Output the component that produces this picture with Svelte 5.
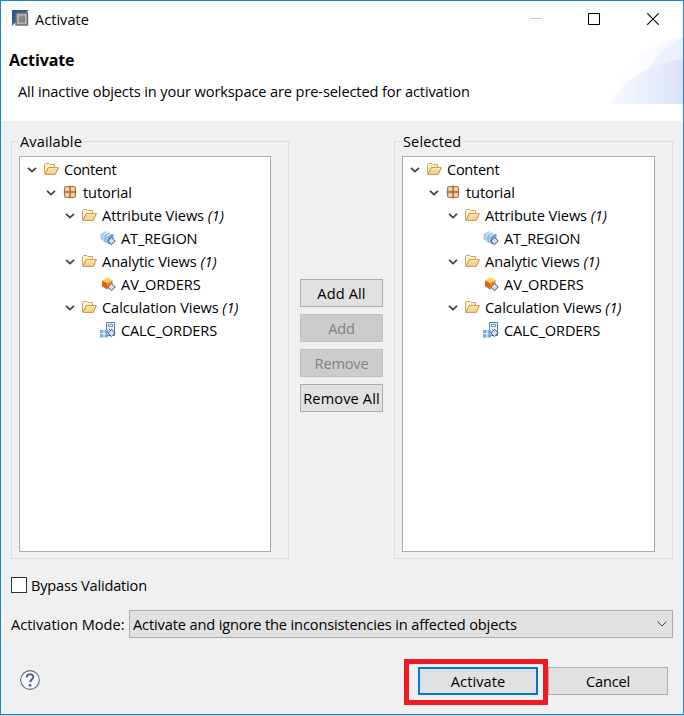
<script>
  const rows = [
    { level: 0, icon: 'folder', label: 'Content' },
    { level: 1, icon: 'package', label: 'tutorial' },
    { level: 2, icon: 'folder', label: 'Attribute Views', count: 1 },
    { level: 3, icon: 'attribute', label: 'AT_REGION', leaf: true },
    { level: 2, icon: 'folder', label: 'Analytic Views', count: 1 },
    { level: 3, icon: 'analytic', label: 'AV_ORDERS', leaf: true },
    { level: 2, icon: 'folder', label: 'Calculation Views', count: 1 },
    { level: 3, icon: 'calculation', label: 'CALC_ORDERS', leaf: true }
  ];
  const actions = [
    { label: 'Add All', wide: true },
    { label: 'Add', disabled: true },
    { label: 'Remove', disabled: true },
    { label: 'Remove All', wide: true }
  ];
</script>

{#snippet badge()}
  <path d="M11.5 7.3 15.2 11 11.5 14.7 7.8 11Z" fill="#d5dce8" stroke="#46536c" />
{/snippet}

{#snippet icon(name)}
  <svg class="icon" width="16" height="16" viewBox="0 0 16 16">
    {#if name === 'folder'}
      <path d="M1.5 12.5V3.5L2.5 2.5H6L7 3.5H11.5V6" fill="#fff0c5" stroke="#cda465" />
      <path d="M1.9 13.3 5.2 6.7H15.4L12.3 13.3Z" fill="#f9d98f" stroke="#c08b42" />
      <path d="M5.7 7.7H14" stroke="#fff1c8" />
    {:else if name === 'package'}
      <rect x="2.5" y="2.5" width="11" height="11" rx="1" fill="#e9bd8c" stroke="#b57645" />
      <path d="M4 5H7M9 5H12M4 11H7M9 11H12" stroke="#f5dbb5" stroke-width="2" />
      <path d="M8 1.5V14.5M1.5 8H14.5" stroke="#8f4c25" />
    {:else if name === 'attribute'}
      <path d="M.5 4 4.5 1.5H7.5L4 4.5V11L.5 9.5Z" fill="#a3cdea" />
      <path d="M3.5 5.5 7.5 2.8H10.5L7 5.5V13L3.5 11.5Z" fill="#84b9e0" />
      <path d="M6.5 7 10.5 4H13.5V10L10 14.5L6.5 13Z" fill="#6ca8d8" />
      <path d="M1 4 5 1.5M4 5.5 8 2.8M7 7 11 4M3.8 5V11M6.8 6.5V12.5" stroke="#d3e8f7" stroke-width=".8" fill="none" />
      {@render badge()}
    {:else if name === 'analytic'}
      <path d="M2 4.5 7.5 1.2 12.5 4 7 7Z" fill="#ffd064" />
      <path d="M2 4.5 7 7V13.5L2 10.3Z" fill="#dd620b" />
      <path d="M7 7 12.5 4V10.5L7 13.5Z" fill="#f18c24" />
      {@render badge()}
    {:else}
      <path d="M6.5 .5H14.5V13.5H6.5Z" fill="#eaf3fd" stroke="#4d7fb9" />
      <rect x="8.5" y="2.5" width="4" height="2" fill="#fff" stroke="#6e9dcb" />
      <path d="M9 7.5H10M11 7.5H12" stroke="#559450" />
      <path d="M0 8H3.5V11.3H0ZM0 12.3H3.5V15.6H0ZM4.5 8H8V11.3H4.5ZM4.5 12.3H8V15.6H4.5Z" fill="#72a9da" />
      {@render badge()}
    {/if}
  </svg>
{/snippet}

{#snippet tree(title, side)}
  <fieldset class="group {side}">
    <legend>{title}</legend>
    <ul class="tree">
      {#each rows as row}
        <li class="row level-{row.level}">
          {#if !row.leaf}
            <svg class="chevron" width="10" height="8" viewBox="0 0 10 8">
              <path d="M1 1.8 5 5.6 9 1.8" fill="none" stroke="#404040" stroke-width="1.7" />
            </svg>
          {/if}
          {@render icon(row.icon)}
          <span class="name {row.icon}">{row.label}{#if row.count}{' '}<em>({row.count})</em>{/if}</span>
        </li>
      {/each}
    </ul>
  </fieldset>
{/snippet}

<div class="screen">
  <main class="dialog">
    <header>
      <div class="titlebar">
        <svg class="app" width="18" height="18" viewBox="0 0 18 18">
          <defs>
            <linearGradient id="corner" x2="1" y2="1"><stop stop-color="#205386" /><stop offset=".45" stop-color="#2d649a" /><stop offset=".8" stop-color="#d5e2ef" /></linearGradient>
            <linearGradient id="metal" x2="1" y2="1"><stop stop-color="#9a9a9a" /><stop offset="1" stop-color="#747474" /></linearGradient>
          </defs>
          <path d="M1 1H18L14 5H5V13L1 17Z" fill="url(#corner)" />
          <rect x="5" y="4" width="11.5" height="12" fill="#aaa" stroke="#686868" stroke-width="1.4" />
          <rect x="7" y="6" width="7.5" height="8" fill="url(#metal)" stroke="#bbb" />
        </svg>
        <span class="window-name">Activate</span>
        <div class="controls">
          <svg width="12" height="12" viewBox="0 0 12 12"><path d="M0 5.5H12" stroke="#ccc" /></svg>
          <svg width="12" height="12" viewBox="0 0 12 12"><path d="M.5.5H11.5V11.5H.5Z" fill="none" stroke="#000" /></svg>
          <svg width="12" height="12" viewBox="0 0 12 12"><path d="M.2.2 11.8 11.8M11.8.2.2 11.8" stroke="#000" stroke-width="1.1" /></svg>
        </div>
      </div>
      <h1>Activate</h1>
      <p>All inactive objects in your workspace are pre-selected for activation</p>
      <svg class="swoosh" width="75" height="67" viewBox="0 0 75 67">
        <defs>
          <linearGradient id="fade"><stop stop-color="#f8faff" /><stop offset=".35" stop-color="#edf2fd" /><stop offset="1" stop-color="#dde4f8" /></linearGradient>
          <linearGradient id="pale"><stop stop-color="#fff" /><stop offset=".5" stop-color="#fafcff" /><stop offset="1" stop-color="#f2f6fe" /></linearGradient>
        </defs>
        <path d="M1 67Q22 8 75 0V67Z" fill="url(#pale)" />
        <path d="M38 38Q50 12 75 1V40Z" fill="#ebf0fd" />
        <path d="M0 67Q29 27 75 22V67Z" fill="url(#fade)" />
      </svg>
    </header>
    <section class="body">
      <div class="panels">
        {@render tree('Available', 'left')}
        <div class="actions">
          {#each actions as action}
            <button disabled={action.disabled} class:wide={action.wide}>{action.label}</button>
          {/each}
        </div>
        {@render tree('Selected', 'right')}
      </div>
      <label class="bypass"><span class="box"></span><span>Bypass Validation</span></label>
      <div class="mode">
        <span class="mode-label">Activation Mode:</span>
        <div class="select">
          <span>Activate and ignore the inconsistencies in affected objects</span>
          <svg width="10" height="6" viewBox="0 0 10 6"><path d="M.5.5 5 5 9.5.5" fill="none" stroke="#444" /></svg>
        </div>
      </div>
      <footer>
        <div class="help">
          <svg width="20" height="20" viewBox="0 0 20 20">
            <circle cx="10" cy="10" r="9.3" fill="#fafafa" stroke="#65728e" stroke-width="1.2" />
            <path d="M6.8 7.4C6.8 3.3 13.3 3.3 13.3 7.1C13.3 9.5 10.2 9.3 10.2 12.2" fill="none" stroke="#566688" stroke-width="2.1" />
            <circle cx="10.1" cy="15.3" r="1.4" fill="#566688" />
          </svg>
        </div>
        <div class="highlight"><button class="primary">Activate</button></div>
        <button class="cancel">Cancel</button>
      </footer>
    </section>
  </main>
</div>

<style>
  * { box-sizing: border-box; }
  .screen {
    width: 684px; height: 716px; background: #c3d9ee; overflow: hidden;
    font: 14.6px/20px "Open Sans", "Noto Sans", sans-serif; letter-spacing: -.12px; color: #000;
  }
  .dialog { width: 684px; height: 715px; border: 1px solid #1883d7; background: #f0f0f0; }
  header { position: relative; height: 120px; background: #fff; }
  .titlebar { display: flex; height: 36px; padding: 8px 24px 0 10px; }
  .app { margin-right: 6px; }
  .window-name { letter-spacing: 0; }
  .controls { display: flex; gap: 47px; margin-left: auto; padding-top: 4px; }
  .controls svg:first-child { margin-right: -1px; }
  h1 { margin: 13px 0 0 8px; font-size: 16px; line-height: 20px; font-weight: 700; letter-spacing: -.1px; }
  p { margin: 11px 0 0 17px; white-space: nowrap; }
  .swoosh { position: absolute; right: 0; top: 36px; }
  .body { padding: 10px 10px 0; }
  .panels { display: flex; height: 428px; }
  .group { min-width: 0; margin: 0; padding: 5px 0 0 7px; border: 1px solid #dcdcdc; height: 428px; }
  .group.left { width: 278px; }
  .group.right { width: 279px; margin-left: auto; }
  legend { display: block; height: 20px; padding: 0 2px; margin-left: -1px; letter-spacing: .12px; }
  .tree { width: 252px; height: 396px; margin: 0; padding: 0; list-style: none; background: #fff; border: 1px solid #acacac; }
  .right .tree { width: 253px; }
  .row { display: flex; align-items: center; height: 23px; white-space: nowrap; }
  .level-0 { padding-left: 7px; }
  .level-1 { padding-left: 26px; }
  .level-2 { padding-left: 45px; }
  .level-3 { padding-left: 80px; }
  .chevron { margin: 3px 6px 0 0; }
  .icon { margin-right: 5px; }
  .name { padding-top: 1px; line-height: 20px; }
  .name.package { letter-spacing: -.1px; }
  .name.folder { letter-spacing: -.08px; }
  .level-0 .name.folder { letter-spacing: -.3px; }
  .attribute, .calculation { letter-spacing: -.15px; }
  .analytic { letter-spacing: -.08px; }
  .actions { display: flex; flex-direction: column; gap: 7px; width: 83px; margin: 148px 0 0 11px; }
  button { display: block; height: 28px; padding: 0; font: inherit; letter-spacing: -.2px; color: #000; background: #e1e1e1; border: 1px solid #adadad; border-radius: 0; white-space: nowrap; }
  button:disabled { color: #838383; background: #ccc; border-color: #bfbfbf; }
  button.wide { letter-spacing: .12px; }
  .bypass { display: flex; align-items: center; height: 20px; margin-top: 16px; letter-spacing: -.2px; }
  .box { width: 16px; height: 16px; margin-right: 4px; border: 1px solid #333; background: #fff; }
  .mode { display: flex; align-items: center; height: 28px; margin-top: 15px; white-space: nowrap; }
  .mode-label { width: 118px; letter-spacing: -.02px; }
  .select { display: flex; align-items: center; justify-content: space-between; width: 544px; height: 28px; padding: 0 5px 0 3px; background: #e1e1e1; border: 1px solid #adadad; letter-spacing: -.14px; }
  footer { display: flex; align-items: flex-start; margin-top: 21px; }
  .help { width: 393px; padding: 11px 0 0 9px; }
  .help svg { display: block; }
  .highlight { width: 144px; height: 46px; padding: 3px 9px; border: 5px solid #ed1c24; }
  .primary { width: 120px; border: 2px solid #0078d7; letter-spacing: .05px; }
  .cancel { width: 120px; margin-top: 8px; }
</style>
